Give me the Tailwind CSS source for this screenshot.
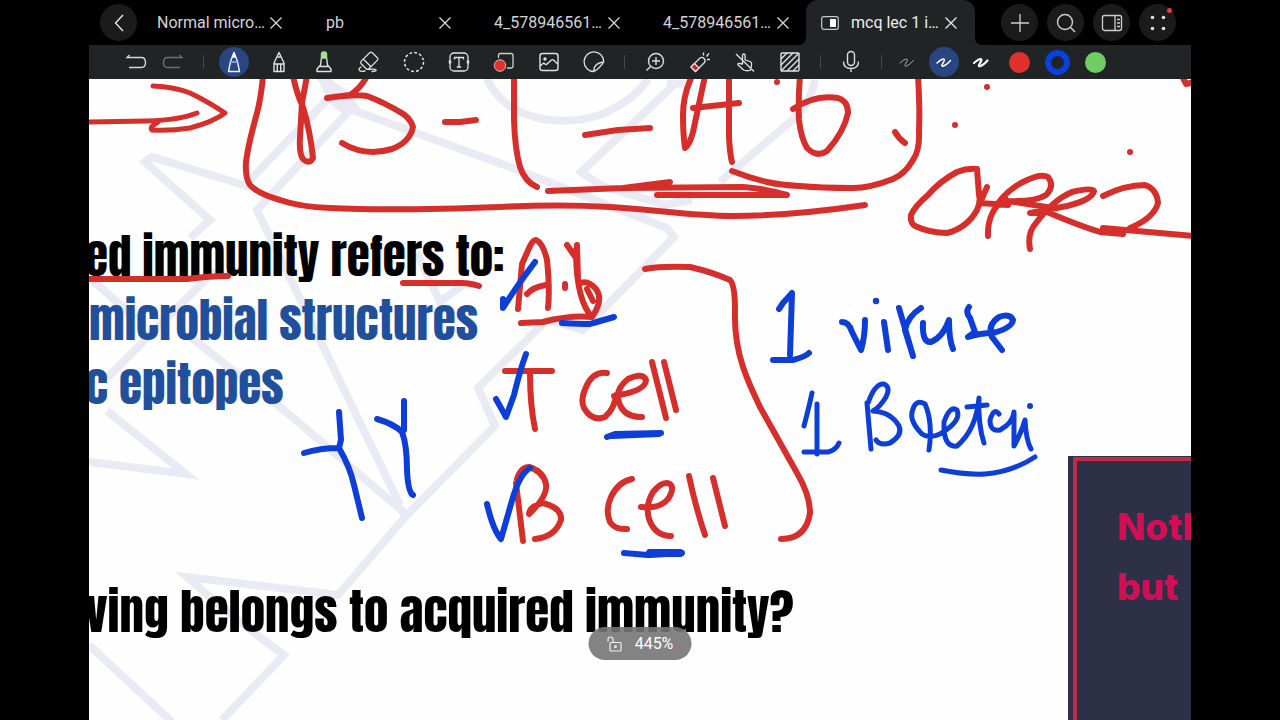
<!DOCTYPE html>
<html lang="en">
<head>
    <meta charset="UTF-8">
    <meta name="viewport" content="width=device-width, initial-scale=1.0">
    <title>mcq lec 1 immunity</title>
    <script src="https://cdn.jsdelivr.net/npm/@tailwindcss/browser@4"></script>
</head>
<body class="bg-black h-screen overflow-hidden font-['Roboto',sans-serif]">
    <div class="mx-[89px] h-screen flex flex-col">

        <!-- Tab bar -->
        <header class="h-[45px] shrink-0 flex items-center pl-[11px] pr-[15px] text-base text-[#d4d4d4]">
            <button aria-label="Back" class="size-[37px] shrink-0 rounded-full bg-[#1b1b1b] flex items-center justify-center">
                <svg class="size-6" viewBox="0 0 24 24" fill="none" stroke="#e6e6e6" stroke-width="1.4"><path d="M16 4 8.500 12 16 20"/></svg>
            </button>
            <nav class="flex-1 h-full grid grid-cols-5 min-w-0 -ml-[7px] mr-[26px]">
                <div class="flex items-center justify-between pl-[27px] pr-[15px]">
                    <button class="whitespace-nowrap">Normal micro…</button>
                    <button aria-label="Close tab"><svg class="size-4" viewBox="0 0 16 16" stroke="#d8d8d8" stroke-width="1.3"><path d="M2.500 2.500l11 11M13.500 2.500l-11 11"/></svg></button>
                </div>
                <div class="flex items-center justify-between pl-[27px] pr-[15px]">
                    <button class="whitespace-nowrap">pb</button>
                    <button aria-label="Close tab"><svg class="size-4" viewBox="0 0 16 16" stroke="#d8d8d8" stroke-width="1.3"><path d="M2.500 2.500l11 11M13.500 2.500l-11 11"/></svg></button>
                </div>
                <div class="flex items-center justify-between pl-[26px] pr-[15px]">
                    <button class="whitespace-nowrap">4_578946561…</button>
                    <button aria-label="Close tab"><svg class="size-4" viewBox="0 0 16 16" stroke="#d8d8d8" stroke-width="1.3"><path d="M2.500 2.500l11 11M13.500 2.500l-11 11"/></svg></button>
                </div>
                <div class="flex items-center justify-between pl-[26px] pr-[15px]">
                    <button class="whitespace-nowrap">4_578946561…</button>
                    <button aria-label="Close tab"><svg class="size-4" viewBox="0 0 16 16" stroke="#d8d8d8" stroke-width="1.3"><path d="M2.500 2.500l11 11M13.500 2.500l-11 11"/></svg></button>
                </div>
                <div class="relative flex items-center justify-between pl-[15px] pr-4 bg-[#202425] rounded-t-xl text-[#ececec]">
                    <svg class="absolute -left-2 bottom-0 size-2" viewBox="0 0 8 8"><path d="M8 0v8H0q8 0 8-8" fill="#202425"/></svg>
                    <svg class="absolute -right-2 bottom-0 size-2" viewBox="0 0 8 8"><path d="M0 0v8h8Q0 8 0 0" fill="#202425"/></svg>
                    <button class="flex items-center gap-3 whitespace-nowrap">
                        <svg class="w-[18px] h-[14px]" viewBox="0 0 18 14"><rect x=".7" y=".7" width="16.600" height="12.600" rx="2" fill="none" stroke="#c8c8c8" stroke-width="1.200"/><path d="M9 3h6v8H9z" fill="#fff"/></svg>
                        mcq lec 1 i…
                    </button>
                    <button aria-label="Close tab"><svg class="size-4" viewBox="0 0 16 16" stroke="#e8e8e8" stroke-width="1.3"><path d="M2.500 2.500l11 11M13.500 2.500l-11 11"/></svg></button>
                </div>
            </nav>
            <div class="flex gap-[9px]">
                <button aria-label="New tab" class="size-[37px] rounded-full bg-[#1b1b1b] flex items-center justify-center">
                    <svg class="size-6" viewBox="0 0 24 24" stroke="#d0d0d0" stroke-width="1.3"><path d="M12 3v18M3 12h18"/></svg>
                </button>
                <button aria-label="Search" class="size-[37px] rounded-full bg-[#1b1b1b] flex items-center justify-center">
                    <svg class="size-6" viewBox="0 0 24 24" fill="none" stroke="#d0d0d0" stroke-width="1.4"><circle cx="11" cy="11" r="7.500"/><path d="M16.500 16.500 21 21"/></svg>
                </button>
                <button aria-label="Side panel" class="size-[37px] rounded-full bg-[#1b1b1b] flex items-center justify-center">
                    <svg class="size-6" viewBox="0 0 24 24" fill="none" stroke="#d0d0d0" stroke-width="1.3"><rect x="2.500" y="4.500" width="19" height="15" rx="2"/><path d="M15 4.500v15M17 8.500h3M17 12h3M17 15.500h3"/></svg>
                </button>
                <button aria-label="More" class="relative size-[37px] rounded-full bg-[#1b1b1b] flex items-center justify-center">
                    <svg class="size-6" viewBox="0 0 24 24" fill="#e0e0e0"><circle cx="6.500" cy="6.500" r="1.800"/><circle cx="17.500" cy="6.500" r="1.800"/><circle cx="6.500" cy="17.500" r="1.800"/><circle cx="17.500" cy="17.500" r="1.800"/></svg>
                    <span class="absolute right-1 top-1 size-[5px] rounded-full bg-[#d94141]"></span>
                </button>
            </div>
        </header>

        <!-- Drawing tools -->
        <div class="h-[34px] shrink-0 flex items-center pl-8 gap-[15px] bg-[#202425]">
            <div class="flex gap-[7px]">
                <button aria-label="Undo" class="size-[30px] flex items-center justify-center">
                    <svg class="size-6" viewBox="0 0 24 24" fill="none" stroke="#d6d6d6" stroke-width="1.4"><path d="M5.500 5 3 7.500h14.500q4 0 4 5t-4 5H5"/></svg>
                </button>
                <button aria-label="Redo" class="size-[30px] flex items-center justify-center">
                    <svg class="size-6" viewBox="0 0 24 24" fill="none" stroke="#6c6f70" stroke-width="1.4"><path d="m18.500 5 2.500 2.500H6.500q-4 0-4 5t4 5H19"/></svg>
                </button>
            </div>
            <span class="w-px h-[14px] bg-[#454849]"></span>
            <button aria-label="Pen" class="size-[30px] rounded-full bg-[#294680] flex items-center justify-center">
                <svg class="size-6" viewBox="0 0 24 24" fill="none" stroke="#f0f4ff" stroke-width="1.4" stroke-linejoin="round"><path d="M12 2.500 8.500 11.500 6.500 21.500h11L15.500 11.500z"/><path d="M8.500 12h7" stroke="#6ea0f5" stroke-width="2"/><path d="M10.500 7 12 3l1.500 4z" fill="#f0f4ff"/></svg>
            </button>
            <button aria-label="Pencil" class="size-[30px] flex items-center justify-center">
                <svg class="size-6" viewBox="0 0 24 24" fill="none" stroke="#e2e2e2" stroke-width="1.4" stroke-linejoin="round"><path d="M12 2.500 7 13v8.500h10V13z"/><path d="M7 14h10M10.300 14v7.500M13.700 14v7.500M10.500 7h3"/></svg>
            </button>
            <button aria-label="Highlighter" class="size-[30px] flex items-center justify-center">
                <svg class="size-6" viewBox="0 0 24 24" fill="none" stroke="#e2e2e2" stroke-width="1.4" stroke-linejoin="round"><path d="M9.500 7.500 8.500 15 5 19v2.500h14V19l-3.500-4-1-7.500M8.500 16.500h7"/><path d="M9.500 8V4q0-2 2.500-2t2.500 2v4z" fill="#a5e09a" stroke="#a5e09a"/></svg>
            </button>
            <button aria-label="Eraser" class="size-[30px] flex items-center justify-center">
                <svg class="size-6" viewBox="0 0 24 24" fill="none" stroke="#dcdcdc" stroke-width="1.3" stroke-linejoin="round" stroke-linecap="round"><path d="M12.700 2.800q1.300-1.300 2.600 0l5 5q1.300 1.300 0 2.600l-8.500 8.300q-1.300 1.300-2.600 0l-5-5q-1.300-1.300 0-2.600zM6.500 9.300l7.500 7.500M4 17q-3 2-1.500 3.500T8 21M12 19.500q6-1 7 .3t-4 1.700"/></svg>
            </button>
            <button aria-label="Lasso" class="size-[30px] flex items-center justify-center">
                <svg class="size-6" viewBox="0 0 24 24" fill="none" stroke="#e2e2e2" stroke-width="1.5"><circle cx="12" cy="12" r="9.500" stroke-dasharray="2.800 2.170"/></svg>
            </button>
            <button aria-label="Text" class="size-[30px] flex items-center justify-center">
                <svg class="size-6" viewBox="0 0 24 24" fill="none" stroke="#e2e2e2" stroke-width="1.3"><rect x="3" y="3" width="18" height="18" rx="4"/><path d="M7.500 9.500V7.500h9v2M12 7.500v9.500M9.800 17h4.400"/><path d="M3 10.500v3M21 10.500v3" stroke-width="2.500"/></svg>
            </button>
            <button aria-label="Record" class="size-[30px] flex items-center justify-center">
                <svg class="size-6" viewBox="0 0 24 24" fill="none" stroke="#cfcfcf" stroke-width="1.3"><path d="M6.500 8V5.500q0-2 2-2H19q2 0 2 2V16q0 2-2 2h-4"/><circle cx="8" cy="15.500" r="5.800" fill="#e2302c" stroke="#e8e0e0" stroke-width=".8"/></svg>
            </button>
            <button aria-label="Image" class="size-[30px] flex items-center justify-center">
                <svg class="size-6" viewBox="0 0 24 24" fill="none" stroke="#e2e2e2" stroke-width="1.4"><rect x="3" y="3.500" width="18" height="17" rx="2.500"/><circle cx="8" cy="9" r="1" fill="#e2e2e2"/><path d="m3 16 3-2.500q1-.5 2 .5t2 0l4.500-4q1-.7 2 0l4 4"/></svg>
            </button>
            <button aria-label="Sticker" class="size-[30px] flex items-center justify-center">
                <svg class="size-6" viewBox="0 0 24 24" fill="none" stroke="#dcdcdc" stroke-width="1.3"><path d="M12 21.500a9.800 9.800 0 1 1 9.700-9.700q-4 6.500-9.700 9.700zM12 21.500q-1-8 9.700-9.700"/></svg>
            </button>
            <span class="w-px h-[14px] bg-[#454849]"></span>
            <button aria-label="Magnify" class="size-[30px] flex items-center justify-center">
                <svg class="size-6" viewBox="0 0 24 24" fill="none" stroke="#dcdcdc" stroke-width="1.4"><circle cx="13" cy="11" r="7.500"/><path d="M13 7v8M9 11h8M7.500 16.500 3.500 20.500"/></svg>
            </button>
            <button aria-label="Laser pointer" class="size-[30px] flex items-center justify-center">
                <svg class="size-6" viewBox="0 0 24 24" fill="none" stroke="#e2e2e2" stroke-width="1.3" stroke-linejoin="round"><path d="m3 17 9-9q2-1.500 4 .5t.5 4l-9 9z"/><path d="M3 17 6.500 13.500l4.500 4.500L7.500 21.500z" fill="#e0162f"/><path d="M15.500 5.500v-3M18.500 6.500l2.500-3M19 9.500h3"/></svg>
            </button>
            <button aria-label="Palm rejection" class="size-[30px] flex items-center justify-center">
                <svg class="size-6" viewBox="0 0 24 24" fill="none" stroke="#e2e2e2" stroke-width="1.3" stroke-linejoin="round"><path d="M9.500 14V5q1.300-2 2.600 0v5l5 1.500q2 1 1.500 3l-1 5.500q-3 1.500-7 0l-5.500-5q-1-2 1.500-1.500zM3 4l18 17.500"/></svg>
            </button>
            <button aria-label="Page pattern" class="size-[30px] flex items-center justify-center">
                <svg class="size-6" viewBox="0 0 24 24" fill="none" stroke="#e2e2e2" stroke-width="1.4"><rect x="3" y="3" width="18" height="18" rx="1"/><path d="M3 9l6-6M3 15 15 3M3 21 21 3M9 21 21 9M15 21l6-6"/></svg>
            </button>
            <span class="w-px h-[14px] bg-[#454849]"></span>
            <button aria-label="Microphone" class="size-[30px] flex items-center justify-center">
                <svg class="size-6" viewBox="0 0 24 24" fill="none" stroke="#dcdcdc" stroke-width="1.4"><rect x="8.500" y="1.500" width="7" height="14" rx="3.500"/><path d="M4.500 11.500q0 7 7.500 7t7.500-7M12 18.500v3.500"/></svg>
            </button>
            <span class="w-px h-[14px] bg-[#454849]"></span>
            <div class="flex items-center gap-2 -ml-[5px]">
                <div class="flex gap-[7px]">
                    <button aria-label="Thin stroke" class="size-[30px] flex items-center justify-center">
                        <svg class="size-6" viewBox="0 0 24 24" fill="none" stroke="#a8aaaa" stroke-width="1" stroke-linecap="round"><path d="M5 13q4.500-4 6.500-4t-.5 4 .5 3 7-5.500"/></svg>
                    </button>
                    <button aria-label="Medium stroke" class="size-[30px] rounded-full bg-[#294680] flex items-center justify-center">
                        <svg class="size-6" viewBox="0 0 24 24" fill="none" stroke="#fff" stroke-width="1.500" stroke-linecap="round"><path d="M5 13q4.500-4 6.500-4t-.5 4 .5 3 7-5.500"/></svg>
                    </button>
                    <button aria-label="Thick stroke" class="size-[30px] flex items-center justify-center">
                        <svg class="size-6" viewBox="0 0 24 24" fill="none" stroke="#fff" stroke-width="2.200" stroke-linecap="round"><path d="M5 13q4.500-4 6.500-4t-.5 4 .5 3 7-5.500"/></svg>
                    </button>
                </div>
                <button aria-label="Red" class="size-[30px] flex items-center justify-center"><span class="size-[21px] rounded-full bg-[#df302d]"></span></button>
                <button aria-label="Blue" class="size-[30px] flex items-center justify-center"><span class="size-[25px] rounded-full border-[6px] border-[#0a3fe0]"></span></button>
                <button aria-label="Green" class="size-[30px] flex items-center justify-center"><span class="size-[21px] rounded-full bg-[#6fcd61]"></span></button>
            </div>
        </div>

        <!-- Page canvas -->
        <main class="relative flex-1 overflow-hidden bg-[#fefefe]">
            <!-- Watermark behind the slide text -->
            <svg class="absolute left-0 top-0 w-[1102px] h-[641px]" viewBox="89 79 1102 641" fill="none" stroke="#e9eaf3" stroke-width="8">
                <path d="M250 187 152 157 145 162 210 220 190 238M250 180 330 97M347 113 257 210 400 505M350 109 510 167 667 228 674 237 583 330 547 320 478 388 495 426 407 515 338 595 187 577 217 603 257 635 284 655 222 720M89 645 172 722"/>
                <path d="M90 278 135 318M107 378 215 270M188 335 290 415 407 515M107 411 186 474 89 462M417 253 440 302 463 285M487 79Q500 105 525 114 560 127 600 115 635 100 648 79M675 84 581 172 602 186 665 205 692 200M815 80Q810 105 790 122L720 182"/>
                <path d="M317 79h14l16 12 14 18-14 8-16-12z M667 80h20l-4 8-16-3z" fill="#e9eaf3" stroke="none"/>
            </svg>

            <!-- Slide text -->
            <div class="relative pt-[145px] -ml-1 font-['Anton','Liberation_Sans',sans-serif] text-[47px] leading-[64px] whitespace-nowrap">
                <h1 class="text-black">ed immunity refers to:</h1>
                <p class="pl-1 text-[#20509c]">microbial structures</p>
                <p class="text-[#20509c]">c epitopes</p>
                <h2 class="mt-[163px] text-[49px] text-black">ving belongs to acquired immunity?</h2>
            </div>

            <!-- Embedded dark card -->
            <div class="absolute left-[979px] top-[377px] right-0 bottom-0 pl-[5px] pt-px bg-[#2d3047] overflow-hidden">
                <div class="h-full border-l-4 border-t-4 border-[#c22b45] pl-10 pt-9 font-['Inter','Liberation_Sans',sans-serif] font-extrabold text-[37px] leading-[60px] text-[#d20f55]">
                    <p>Nothing</p>
                    <p>but</p>
                </div>
            </div>

            <!-- Ink -->
            <svg class="absolute left-0 top-0 w-[1102px] h-[641px]" viewBox="89 79 1102 641" fill="none" stroke-width="6" stroke-linecap="round" stroke-linejoin="round">
                <g stroke="#d62f2b">
                    <path stroke-width="5" d="M85 122 147 121Q180 120 197 113M153 86Q175 87 190 93 207 101 225 113 213 122 190 128 170 131 152 130 149 127 158 122"/>
                    <path d="M263 76Q261 98 257 113 248 145 246 162 245 178 250 185 258 194 280 200 300 207 330 208 390 211 500 207 560 204 610 207C660 210 690 216 733 216Q790 216 865 205"/>
                    <path d="M293 76Q297 95 303 107 310 130 313 158 309 165 303 159 299 154 300 137L302 103 307 76M367 76Q361 88 350 95L327 98Q355 94 367 96 383 102 400 112 410 117 413 127 410 142 392 149 365 157 342 143M445 122 460 122 476 120"/>
                    <path d="M514 76V120Q515 150 520 167 525 182 537 187M585 135 618 130 650 128M548 191 623 188 670 182M623 188 743 187Q762 188 787 195L657 195"/>
                    <path d="M692 76Q683 95 683 115 683 135 685 148 690 144 693 132L705 76M693 108 739 103M729 76V137Q730 155 732 162M800 76Q798 100 799 120 801 138 807 148 817 158 827 151 844 132 848 113 848 101 838 98 815 94 793 109M895 132Q899 139 905 143"/>
                    <path d="M918 76Q920 110 919 130 920 150 913 160 905 174 893 179 870 188 853 188 820 188 800 186 780 185 767 182 750 178 732 171"/>
                    <path d="M1182 76 1186 84 1195 82"/>
                    <path d="M977 169Q967 168 957 172 940 181 928 195 915 206 911 215 910 223 915 226 930 233 947 233 967 228 977 210 981 201 979 195L977 169M987 187 980 203 1008 205M1005 198Q987 212 988 236M998 203Q1010 188 1025 181 1041 173 1048 177 1055 186 1046 195 1035 202 1008 201L1053 208M1030 249Q1027 233 1036 223 1053 200 1072 192 1092 187 1094 191 1092 200 1067 206L1030 213 1047 212Q1080 226 1100 232L1123 234M1103 228 1195 236M1103 196Q1125 185 1145 185 1157 189 1158 203 1154 218 1130 228"/>
                    <path d="M85 279H187Q210 276 228 276M403 283H463Q474 284 479 286"/>
                    <path d="M518 309 522 264 530 246Q533 240 536 240 543 243 547 260 550 290 548 308M527 294Q533 287 546 285M565 284V288M567 245 576 258 577 245 578 280M576 250Q576 300 592 317 604 300 596 289 588 280 581 283M587 289 593 301M521 323 543 322Q570 315 592 317"/>
                    <path d="M645 269Q660 266 690 267 712 272 730 280 735 285 735 310 734 340 743 367 748 382 760 407L797 473Q810 495 810 513 806 539 781 539"/>
                    <path d="M505 371H552M530 373Q530 405 535 429M607 373Q593 371 586 387 580 400 584 408 592 422 605 417 615 408 616 395M614 396Q646 391 646 380 643 372 628 379 613 391 620 405 625 417 642 417M652 362 666 418M664 362 676 410"/>
                    <path d="M516 483 523 541M517 479Q521 467 529 467 543 471 546 484 548 496 529 514 530 506 543 503 562 508 561 520 555 537 535 539M632 479Q618 482 611 497 605 510 610 522 615 530 627 529M641 507Q660 509 668 499 675 488 670 484 663 480 653 492 645 505 649 519 655 536 671 536M689 476Q695 505 705 535M713 478 725 526"/>
                </g>
                <g fill="#d62f2b"><circle cx="777" cy="82" r="3"/><circle cx="987" cy="87" r="3"/><circle cx="955" cy="125" r="3"/><circle cx="1130" cy="152" r="3"/></g>
                <g stroke="#0d3ed8" stroke-width="6">
                    <path d="M503 299V308Q514 290 535 262M562 323Q580 324 590 324 600 321 614 317M526 354Q520 370 514 395L506 417 496 399M487 504Q493 530 501 539L513 497Q520 474 530 468"/>
                    <path d="M607 437 615 434 661 433M612 436 659 434M624 553 648 555M650 552 682 553 650 555" />
                    <path d="M650 553H680" stroke-width="8"/>
                    <path d="M339 412 341 440 339 448Q320 448 304 453M339 448Q350 467 354 485L362 518M404 401V430M377 419Q394 424 402 432 407 445 407 470 408 492 413 495"/>
                    <path d="M779 309 783 303 792 293 790 355M773 360H793Q805 357 809 353M842 322Q849 322 852 332L861 350Q865 337 865 320M884 322 888 350M899 308 913 356 905 330Q908 316 921 308M923 323Q922 343 931 342 943 337 949 320 949 340 953 349M969 307Q965 312 970 318L975 332 968 337Q980 333 993 333 1012 328 1013 320 1010 313 999 317 987 325 992 337L1002 350"/>
                    <path d="M812 393Q809 407 804 426M817 404V454M804 452H828Q836 450 839 443M867 403 871 449M868 403Q875 383 884 384 891 387 886 397 880 407 873 411 891 412 899 426 903 435 890 443 880 446 876 440M925 404Q916 399 913 409 908 420 922 434 929 439 940 434 962 421 957 410 950 405 944 422 943 448 957 446 976 430 979 398 978 425 984 443M925 404Q933 422 929 450M967 407 987 405" stroke-width="5"/>
                    <path d="M999 414Q994 407 990 420 990 432 1000 430 1013 423 1014 412L1014 446Q1022 431 1025 420 1026 440 1031 449M941 470Q966 475 985 474 1012 472 1035 457" stroke-width="5"/>
                </g>
                <g fill="#0d3ed8"><circle cx="876" cy="301" r="3.200"/><circle cx="1030" cy="406" r="3"/></g>
            </svg>

            <!-- Zoom indicator -->
            <div class="absolute left-1/2 -translate-x-1/2 bottom-[60px] w-[103px] h-[33px] rounded-full bg-[#757575]/90 flex items-center justify-center gap-3 text-base text-white">
                <svg class="size-4" viewBox="0 0 16 16" fill="none" stroke="#f0f0f0" stroke-width="1.200"><rect x="3.500" y="6.500" width="11" height="8.500" rx="1"/><path d="M1.500 5.500V3.500q0-2.500 2.500-2.500t2.500 2.500v3"/><circle cx="9" cy="10.700" r=".8" fill="#f0f0f0"/></svg>
                <span>445%</span>
            </div>
        </main>
    </div>
</body>
</html>
